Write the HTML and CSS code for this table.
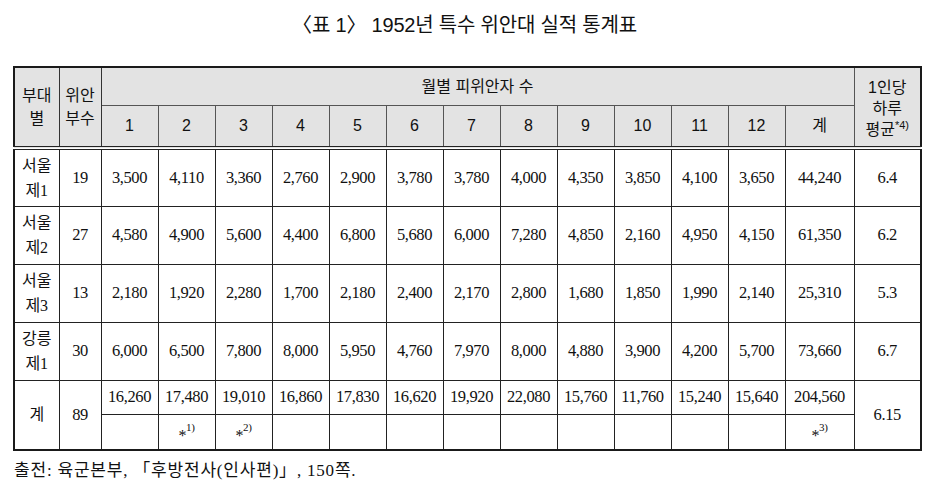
FILE: index.html
```html
<!DOCTYPE html>
<html lang="ko">
<head>
<meta charset="utf-8">
<title>표 1</title>
<link rel="stylesheet" href="styles.css">
</head>
<body>
<div class="page">
  <h1 class="title">〈표 1〉 1952년 특수 위안대 실적 통계표</h1>
  <table class="stats">
    <colgroup>
      <col class="c-unit"><col class="c-num">
      <col class="c-m"><col class="c-m"><col class="c-m"><col class="c-m"><col class="c-m"><col class="c-m">
      <col class="c-m"><col class="c-m"><col class="c-m"><col class="c-m"><col class="c-m"><col class="c-m">
      <col class="c-sum"><col class="c-avg">
    </colgroup>
    <thead>
      <tr class="h1">
        <th rowspan="2">부대<br>별</th>
        <th rowspan="2">위안<br>부수</th>
        <th colspan="13">월별 피위안자 수</th>
        <th rowspan="2" class="avg-h">1인당<br>하루<br>평균<sup>*4)</sup></th>
      </tr>
      <tr class="h2">
        <th>1</th><th>2</th><th>3</th><th>4</th><th>5</th><th>6</th>
        <th>7</th><th>8</th><th>9</th><th>10</th><th>11</th><th>12</th>
        <th>계</th>
      </tr>
    </thead>
    <tbody>
      <tr class="row">
        <td class="unit">서울<br>제1</td><td>19</td>
        <td>3,500</td><td>4,110</td><td>3,360</td><td>2,760</td><td>2,900</td><td>3,780</td>
        <td>3,780</td><td>4,000</td><td>4,350</td><td>3,850</td><td>4,100</td><td>3,650</td>
        <td>44,240</td><td>6.4</td>
      </tr>
      <tr class="row">
        <td class="unit">서울<br>제2</td><td>27</td>
        <td>4,580</td><td>4,900</td><td>5,600</td><td>4,400</td><td>6,800</td><td>5,680</td>
        <td>6,000</td><td>7,280</td><td>4,850</td><td>2,160</td><td>4,950</td><td>4,150</td>
        <td>61,350</td><td>6.2</td>
      </tr>
      <tr class="row">
        <td class="unit">서울<br>제3</td><td>13</td>
        <td>2,180</td><td>1,920</td><td>2,280</td><td>1,700</td><td>2,180</td><td>2,400</td>
        <td>2,170</td><td>2,800</td><td>1,680</td><td>1,850</td><td>1,990</td><td>2,140</td>
        <td>25,310</td><td>5.3</td>
      </tr>
      <tr class="row">
        <td class="unit">강릉<br>제1</td><td>30</td>
        <td>6,000</td><td>6,500</td><td>7,800</td><td>8,000</td><td>5,950</td><td>4,760</td>
        <td>7,970</td><td>8,000</td><td>4,880</td><td>3,900</td><td>4,200</td><td>5,700</td>
        <td>73,660</td><td>6.7</td>
      </tr>
      <tr class="tot1">
        <td rowspan="2" class="unit">계</td><td rowspan="2">89</td>
        <td>16,260</td><td>17,480</td><td>19,010</td><td>16,860</td><td>17,830</td><td>16,620</td>
        <td>19,920</td><td>22,080</td><td>15,760</td><td>11,760</td><td>15,240</td><td>15,640</td>
        <td>204,560</td><td rowspan="2">6.15</td>
      </tr>
      <tr class="tot2">
        <td></td><td><span class="ast">*</span><sup>1)</sup></td><td><span class="ast">*</span><sup>2)</sup></td><td></td><td></td><td></td>
        <td></td><td></td><td></td><td></td><td></td><td></td>
        <td><span class="ast">*</span><sup>3)</sup></td>
      </tr>
    </tbody>
  </table>
  <p class="source">출전: 육군본부, 「후방전사(인사편)」, 150쪽.</p>
</div>
</body>
</html>
```

FILE: styles.css
```css
html, body {
  margin: 0;
  padding: 0;
  background: #ffffff;
}

.page {
  width: 929px;
  padding-top: 12px;
  color: #111;
}

.title {
  margin: 0;
  text-align: center;
  font-family: "Liberation Sans", "Noto Sans CJK KR", sans-serif;
  font-weight: normal;
  font-size: 20px;
  line-height: 26px;
  letter-spacing: -0.2px;
}

.stats {
  margin: 28px 0 0 13px;
  border-collapse: collapse;
  table-layout: fixed;
  width: 908px;
  border: 2px solid #1a1a1a;
}

.c-unit { width: 45px; }
.c-num { width: 42px; }
.c-m { width: 57px; }
.c-sum { width: 69px; }
.c-avg { width: 67px; }

.stats th {
  background: #e3e3e3;
  font-family: "Liberation Sans", "Noto Sans CJK KR", sans-serif;
  font-weight: normal;
  font-size: 16px;
  line-height: 23px;
  border: 1px solid #555;
  padding: 0;
  text-align: center;
  vertical-align: middle;
  color: #111;
}

.stats thead tr:first-child th:first-child,
.stats thead tr:first-child th:nth-child(2) {
  border-color: #333;
}

.stats .avg-h {
  line-height: 21px;
  padding-top: 2px;
}

.stats th sup,
.stats td sup {
  font-size: 11px;
  line-height: 0;
  vertical-align: 6px;
}

.h1 { height: 38px; }
.h2 { height: 43px; }

.h2 th {
  border-bottom: 4px double #222;
}

.stats thead tr:first-child th[rowspan] {
  border-bottom: 4px double #222;
}

.stats td {
  font-family: "Liberation Serif", "Noto Sans CJK KR", serif;
  font-size: 16.5px;
  line-height: 24px;
  border: 1px solid #222;
  padding: 0;
  text-align: center;
  vertical-align: middle;
  color: #111;
  letter-spacing: -0.4px;
}

.stats td.unit {
  font-size: 16px;
  line-height: 25px;
  letter-spacing: 0;
}

.row { height: 58px; }
.tot1 { height: 34px; }
.tot2 { height: 36px; }

.ast {
  font-size: 16px;
  position: relative;
  top: 4px;
}

.source {
  margin: 8px 0 0 14px;
  font-family: "Liberation Serif", "Noto Sans CJK KR", serif;
  font-size: 17px;
  line-height: 24px;
  letter-spacing: 0.8px;
  color: #111;
}
```
